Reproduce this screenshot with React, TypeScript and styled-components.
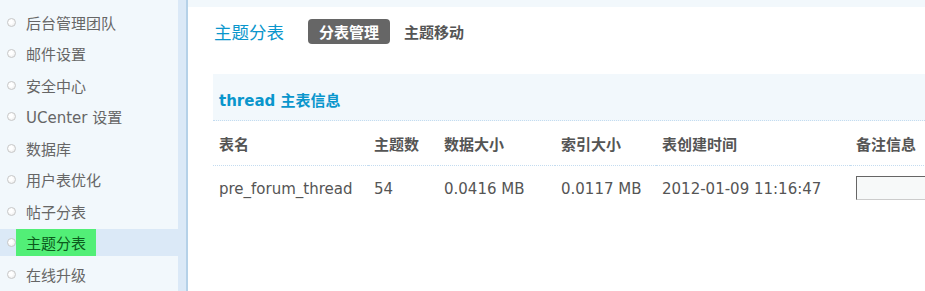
import styled, { createGlobalStyle } from "styled-components";

const GlobalStyle = createGlobalStyle`
  html, body {
    margin: 0;
    padding: 0;
    background: #fff;
    overflow: hidden;
  }
  body {
    font-family: "DejaVu Sans", "Noto Sans CJK SC", sans-serif;
    font-size: 15px;
    color: #555;
  }
`;

const Page = styled.div`
  display: flex;
  width: 925px;
  height: 291px;
  overflow: hidden;
`;

const Sidebar = styled.div`
  display: flex;
  width: 188px;
  flex-shrink: 0;
  background: #dbe9f7;
  border-right: 2px solid #b5d1e8;
  box-sizing: border-box;
`;

const Menu = styled.ul`
  list-style: none;
  margin: 0;
  padding: 8.5px 0 0;
  width: 178px;
  background: #f2f8fc;
`;

const MenuItem = styled.li<{ $active?: boolean }>`
  display: flex;
  align-items: center;
  height: 27px;
  margin-bottom: 4.5px;
  background: ${(p) => (p.$active ? "#dbe9f7" : "transparent")};
`;

const Bullet = styled.span`
  width: 7px;
  height: 7px;
  margin-left: 7px;
  border-radius: 50%;
  border: 1px solid #c8c8c8;
  background: radial-gradient(circle at 40% 40%, #fff 30%, #e6e6e6 100%);
  flex-shrink: 0;
`;

const MenuLink = styled.a<{ $active?: boolean }>`
  display: flex;
  align-items: center;
  height: 100%;
  padding: 0 10px;
  color: ${(p) => (p.$active ? "#0b5a1c" : "#666")};
  background: ${(p) => (p.$active ? "#52ef77" : "transparent")};
  text-decoration: none;
  white-space: nowrap;
`;

const Main = styled.div`
  flex: 1;
  display: flex;
  flex-direction: column;
  min-width: 0;
`;

const TopStrip = styled.div`
  height: 7px;
  background: #f2f8fc;
`;

const Content = styled.div`
  padding: 12px 0 0 25px;
`;

const TitleBar = styled.div`
  display: flex;
  align-items: center;
  height: 25px;
`;

const Title = styled.h3`
  margin: 0 24px 0 1px;
  font-size: 17.5px;
  font-weight: normal;
  color: #0a96cc;
`;

const Tab = styled.a<{ $current?: boolean }>`
  display: flex;
  align-items: center;
  height: 25px;
  padding: 0 11px;
  margin-right: 3px;
  border-radius: 4px;
  font-weight: bold;
  color: ${(p) => (p.$current ? "#fff" : "#555")};
  background: ${(p) => (p.$current ? "#666" : "transparent")};
  text-decoration: none;
`;

const Section = styled.div`
  margin-top: 30px;
`;

const SectionHead = styled.div`
  display: flex;
  align-items: center;
  height: 47px;
  padding: 5px 0 0 6px;
  box-sizing: border-box;
  background: #f2f8fc;
  border-bottom: 1px dotted #c4dcf0;
  font-weight: bold;
  color: #0a96cc;
`;

const Table = styled.div`
  display: grid;
  grid-template-columns: 155px 70px 117px 101px 194px 1fr;
`;

const Cell = styled.div<{ $head?: boolean }>`
  display: flex;
  align-items: center;
  height: ${(p) => (p.$head ? "44px" : "46px")};
  padding-left: 6px;
  white-space: nowrap;
  font-weight: ${(p) => (p.$head ? "bold" : "normal")};
  color: #555;
  border-bottom: ${(p) => (p.$head ? "1px dotted #c4dcf0" : "none")};
`;

const NoteInput = styled.input`
  width: 110px;
  height: 24px;
  margin-top: -2px;
  box-sizing: border-box;
  border: 1px solid;
  border-color: #666 #ccc #ccc #666;
  background: #f7f9f9;
`;

const heads = ["表名", "主题数", "数据大小", "索引大小", "表创建时间", "备注信息"];

const menu = [
  "后台管理团队",
  "邮件设置",
  "安全中心",
  "UCenter 设置",
  "数据库",
  "用户表优化",
  "帖子分表",
  "主题分表",
  "在线升级",
];

export default function App() {
  return (
    <>
      <GlobalStyle />
      <Page>
        <Sidebar>
          <Menu>
            {menu.map((m) => (
              <MenuItem key={m} $active={m === "主题分表"}>
                <Bullet />
                <MenuLink $active={m === "主题分表"}>{m}</MenuLink>
              </MenuItem>
            ))}
          </Menu>
        </Sidebar>
        <Main>
          <TopStrip />
          <Content>
            <TitleBar>
              <Title>主题分表</Title>
              <Tab $current>分表管理</Tab>
              <Tab>主题移动</Tab>
            </TitleBar>
            <Section>
              <SectionHead>thread 主表信息</SectionHead>
              <Table>
                {heads.map((h) => (
                  <Cell key={h} $head>
                    {h}
                  </Cell>
                ))}
                <Cell>pre_forum_thread</Cell>
                <Cell>54</Cell>
                <Cell>0.0416 MB</Cell>
                <Cell>0.0117 MB</Cell>
                <Cell>2012-01-09 11:16:47</Cell>
                <Cell>
                  <NoteInput />
                </Cell>
              </Table>
            </Section>
          </Content>
        </Main>
      </Page>
    </>
  );
}
